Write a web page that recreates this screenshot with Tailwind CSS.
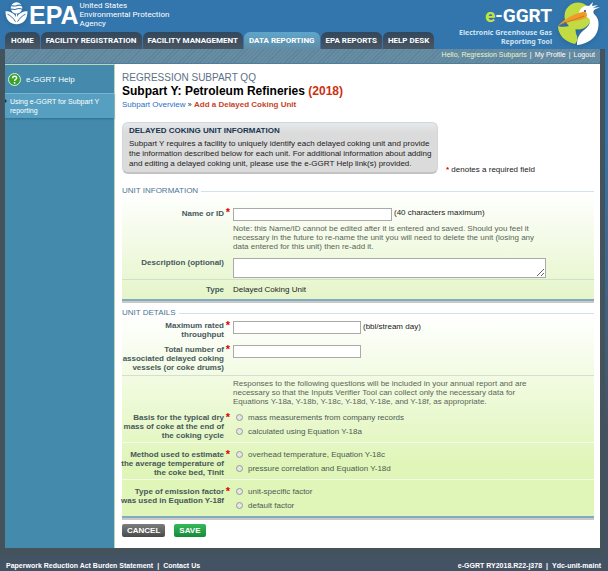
<!DOCTYPE html>
<html lang="en">
  <head>
    <meta charset="UTF-8" />
    <meta name="viewport" content="width=device-width, initial-scale=1.0" />
    <script src="https://cdn.jsdelivr.net/npm/@tailwindcss/browser@4"></script>
    <title>e-GGRT - Add a Delayed Coking Unit</title>
  </head>
  <body class="min-h-screen flex flex-col bg-[#445364] bg-linear-to-b from-[#3276ad] from-25% to-[#445364] to-75% font-['Liberation_Sans',Arial,sans-serif] text-[8px] leading-[9px] text-[#222]">
    <header class="relative bg-[#3276ad] pl-[5px] text-white">
      <a href="#" class="flex items-start h-[32px] pt-[1px] w-fit" aria-label="EPA home">
        <svg class="w-[23px] h-[24px] drop-shadow-sm" viewBox="0 0 23 24" fill="white">
          <circle cx="11.5" cy="7" r="5.8" />
          <path d="M5 5.2c2-1.6 4 .8 6.5-.5s4-.6 6.5.5M5 8.6c2-1.6 4 .8 6.5-.5s4-.6 6.5.5" fill="none" stroke="#3276ad" stroke-width="1.1" />
          <path d="M.5 10.3c4.6 0 8.5 1.8 10.4 5.6v-3h1.2v3c1.9-3.8 5.8-5.6 10.4-5.6 0 8-4 13-11 13S.5 18.3.5 10.3z" />
          <path d="M2.5 13.2c3 1.4 5.8 3.8 8 7.5M20.5 13.2c-3 1.4-5.8 3.8-8 7.5" fill="none" stroke="#3276ad" stroke-width="1" />
        </svg>
        <span class="pl-[1px] font-bold text-[25px] leading-[28px]">EPA</span>
        <span class="pl-[1px] text-[8px] leading-[9px] font-['Roboto',sans-serif]">United States<br />Environmental Protection<br />Agency</span>
      </a>
      <div class="absolute right-[7px] top-[1px] flex gap-[5px]">
        <div class="text-right font-bold pt-[3px]">
          <div class="text-[19px] leading-[24px] font-['Roboto',sans-serif]"><span class="text-[#c6e53c]">e</span>-GGRT</div>
          <div class="text-[7px] leading-[9px] font-['Noto_Sans',sans-serif] text-[#cfe4f3]">Electronic Greenhouse Gas<br />Reporting Tool</div>
        </div>
        <svg class="w-[44px] h-[46px] drop-shadow-sm" viewBox="0 0 44 46">
          <circle cx="21" cy="15" r="13.5" fill="#c0dc42" />
          <path d="M1 25c6 2 12 0 17-2 1 5 0 8 2 12 1 3 0 6-2 8C8 41 1 34 1 25z" fill="#c0dc42" />
          <path d="M22 12c1-5 5-8 10-7l4-4-1 4 6-1-5 3 7-1-6 3c-1 2-1 3 1 5 4 4 4 9 3 14-2 9-10 15-21 16 0-7 2-11 7-15 4-3 6-6 6-9 0-2-2-4-4-4z" fill="white" />
          <path d="M1 25c5-6 13-11 24-14 3-1 5 0 5 3 0 2-1 3-4 4-5 2-13 2-18 3z" fill="#ef9b2a" />
          <path d="M5 23l22-8" stroke="#c9701c" stroke-width=".8" />
          <circle cx="28" cy="10" r="1" fill="#345" />
        </svg>
      </div>
      <nav class="flex items-end gap-[1px] font-['Roboto',sans-serif] font-bold text-[8px] leading-[17px] whitespace-nowrap">
        <a href="#" class="px-[6px] rounded-t-md bg-linear-to-b from-[#31475c] to-[#4a5663]">HOME</a>
        <a href="#" class="px-[5px] rounded-t-md bg-linear-to-b from-[#31475c] to-[#4a5663]">FACILITY REGISTRATION</a>
        <a href="#" class="px-[5px] rounded-t-md bg-linear-to-b from-[#31475c] to-[#4a5663]">FACILITY MANAGEMENT</a>
        <a href="#" class="px-[5px] rounded-t-md bg-linear-to-b from-[#5ea5cb] to-[#608ca5]">DATA REPORTING</a>
        <a href="#" class="px-[5px] rounded-t-md bg-linear-to-b from-[#31475c] to-[#4a5663]">EPA REPORTS</a>
        <a href="#" class="px-[5px] rounded-t-md bg-linear-to-b from-[#31475c] to-[#4a5663]">HELP DESK</a>
      </nav>
    </header>

    <div class="flex-1 flex flex-col mr-[3px] px-[5px] pb-[7px] bg-[#44535b]">
      <div class="flex justify-end gap-[3px] h-[15px] pr-[5px] text-[7px] leading-[11px] text-white border-b border-[#4c7f9b] bg-[repeating-linear-gradient(135deg,#5e849b_0_1px,#668da4_1px_3px)]">
        <span class="text-[#e4f6d2]">Hello, Regression Subparts</span>
        <span>|</span>
        <a href="#">My Profile</a>
        <span>|</span>
        <a href="#">Logout</a>
      </div>

      <div class="flex-1 flex bg-white">
        <aside class="w-[110px] shrink-0 bg-[#448aad] border-t border-r border-[#b9d8b5] text-white">
          <a href="#" class="flex items-center gap-[5px] h-[28px] px-[3px]">
            <svg class="w-[13px] h-[13px]" viewBox="0 0 13 13">
              <circle cx="6.5" cy="6.5" r="6" fill="#3ba32c" stroke="#dcefd8" />
              <path d="M4.6 5.2c0-2.6 4-2.5 4-.3 0 1.5-2 1.4-2 3.1" fill="none" stroke="white" stroke-width="1.4" />
              <circle cx="6.6" cy="9.8" r=".9" fill="white" />
            </svg>
            e-GGRT Help
          </a>
          <a href="#" class="relative block py-[3px] px-[5px] bg-[#579fc1] border-t border-[#78b3cf] shadow-[0_1px_2px_#2d6f92] text-[7px]">
            <span class="absolute left-0 top-[5px] border-y-[2px] border-y-transparent border-l-[2px] border-l-[#22333d]"></span>
            Using e-GGRT for Subpart Y reporting
          </a>
        </aside>

        <main class="flex-1 pl-[7px] pr-[6px] pt-[8px] pb-[11px]">
          <div class="text-[10px] leading-[11px] text-[#5c7286]">REGRESSION SUBPART QQ</div>
          <h1 class="pt-[1px] text-[12px] leading-[15px] font-bold text-black">Subpart Y: Petroleum Refineries <span class="text-[#cc3010]">(2018)</span></h1>
          <div class="leading-[11px]"><a href="#" class="text-[#2a6fc4]">Subpart Overview</a> <span class="text-[7px]">»</span> <span class="font-bold text-[#c8431f]">Add a Delayed Coking Unit</span></div>

          <div class="flex items-end gap-[8px] pt-[12px]">
            <section class="w-[316px] pt-[3px] pb-[3px] pl-[6px] pr-[1px] rounded-md border border-[#d2d6d6] border-b-2 border-b-[#c3c3c3] bg-linear-to-b from-[#e4eaea] to-[#dbdbdb] to-20%">
              <h2 class="font-bold leading-[10px] text-[#193550]">DELAYED COKING UNIT INFORMATION</h2>
              <p class="pt-[3px] leading-[10px]">Subpart Y requires a facility to uniquely identify each delayed coking unit and provide the information described below for each unit. For additional information about adding and editing a delayed coking unit, please use the e-GGRT Help link(s) provided.</p>
            </section>
            <div><span class="text-[#d00] font-bold">*</span> denotes a required field</div>
          </div>

          <form>
            <fieldset class="mt-[12px] border-t border-[#cfe3ec] bg-linear-to-b from-white to-[#e5f5c9] border-b-2 border-b-[#83abc0] shadow-[0_2px_0_#c9c9c9]">
              <legend class="pr-[3px] leading-[10px] text-[#4b7590]">UNIT INFORMATION</legend>
              <div class="grid grid-cols-[102px_1fr] gap-x-[9px] pt-[12px] pb-[7px]">
                <label for="name" class="relative pt-[1px] text-right font-bold text-[#47585b]">Name or ID<span class="absolute -right-[6px] top-0 text-[11px] text-[#d00]">*</span></label>
                <div>
                  <div class="flex items-start gap-[2px]">
                    <input id="name" type="text" maxlength="40" class="w-[159px] h-[13px] bg-white border border-[#aaa]" />
                    <span>(40 characters maximum)</span>
                  </div>
                  <p class="w-[312px] pt-[3px] text-[#5b6559]">Note: this Name/ID cannot be edited after it is entered and saved. Should you feel it necessary in the future to re-name the unit you will need to delete the unit (losing any data entered for this unit) then re-add it.</p>
                </div>
              </div>
              <div class="grid grid-cols-[102px_1fr] gap-x-[9px]">
                <label for="description" class="text-right font-bold text-[#47585b]">Description (optional)</label>
                <textarea id="description" class="block w-[313px] h-[20px] bg-white border border-[#aaa]"></textarea>
              </div>
              <div class="grid grid-cols-[102px_1fr] gap-x-[9px] mt-[1px] py-[5px] border-t border-[#d3dfc8]">
                <span class="text-right font-bold text-[#47585b]">Type</span>
                <span>Delayed Coking Unit</span>
              </div>
            </fieldset>

            <fieldset class="mt-[7px] border-t border-[#cfe3ec] bg-linear-to-b from-white to-[#e0f5b8] to-75% border-b-2 border-b-[#83abc0] shadow-[0_2px_0_#c9c9c9]">
              <legend class="pr-[3px] leading-[10px] text-[#4b7590]">UNIT DETAILS</legend>
              <div class="grid grid-cols-[102px_1fr] gap-x-[9px] pt-[3px]">
                <label for="rate" class="relative text-right font-bold text-[#47585b]">Maximum rated<br />throughput<span class="absolute -right-[6px] top-0 text-[11px] text-[#d00]">*</span></label>
                <div class="flex items-start gap-[2px] h-[24px]">
                  <input id="rate" type="text" class="w-[128px] h-[13px] bg-white border border-[#aaa]" />
                  <span class="pt-[1px]">(bbl/stream day)</span>
                </div>
              </div>
              <div class="grid grid-cols-[102px_1fr] gap-x-[9px] pb-[3px]">
                <label for="vessels" class="relative -ml-[6px] text-right font-bold text-[#47585b]">Total number of<br />associated delayed coking<br />vessels (or coke drums)<span class="absolute -right-[6px] top-0 text-[11px] text-[#d00]">*</span></label>
                <input id="vessels" type="text" class="w-[128px] h-[13px] bg-white border border-[#aaa]" />
              </div>
              <p class="border-t border-[#d3dfd0] pl-[111px] pr-[64px] pt-[3px] pb-[7px] text-[#5b6559]">Responses to the following questions will be included in your annual report and are necessary so that the Inputs Verifier Tool can collect only the necessary data for Equations Y-18a, Y-18b, Y-18c, Y-18d, Y-18e, and Y-18f, as appropriate.</p>

              <div role="radiogroup" aria-labelledby="basis" class="grid grid-cols-[102px_1fr] gap-x-[9px] h-[29px]">
                <span id="basis" class="relative -ml-[6px] text-right font-bold text-[#47585b]">Basis for the typical dry<br />mass of coke at the end of<br />the coking cycle<span class="absolute -right-[6px] top-0 text-[11px] text-[#d00]">*</span></span>
                <div class="flex flex-col gap-[5px] pl-[3px] text-[#4d5a54]">
                  <label class="flex items-center gap-[5px]"><input type="radio" name="basis" class="appearance-none w-[7px] h-[7px] rounded-full border border-[#999] bg-[#e6e6e6]" />mass measurements from company records</label>
                  <label class="flex items-center gap-[5px]"><input type="radio" name="basis" class="appearance-none w-[7px] h-[7px] rounded-full border border-[#999] bg-[#e6e6e6]" />calculated using Equation Y-18a</label>
                </div>
              </div>
              <div role="radiogroup" aria-labelledby="method" class="grid grid-cols-[102px_1fr] gap-x-[9px] h-[37px] pt-[7px] border-t border-[#f4fbe6]">
                <span id="method" class="relative -ml-[6px] text-right font-bold text-[#47585b]">Method used to estimate<br />the average temperature of<br />the coke bed, Tinit<span class="absolute -right-[6px] top-0 text-[11px] text-[#d00]">*</span></span>
                <div class="flex flex-col gap-[5px] pl-[3px] text-[#4d5a54]">
                  <label class="flex items-center gap-[5px]"><input type="radio" name="method" class="appearance-none w-[7px] h-[7px] rounded-full border border-[#999] bg-[#e6e6e6]" />overhead temperature, Equation Y-18c</label>
                  <label class="flex items-center gap-[5px]"><input type="radio" name="method" class="appearance-none w-[7px] h-[7px] rounded-full border border-[#999] bg-[#e6e6e6]" />pressure correlation and Equation Y-18d</label>
                </div>
              </div>
              <div role="radiogroup" aria-labelledby="factor" class="grid grid-cols-[102px_1fr] gap-x-[9px] h-[37px] pt-[7px] border-t border-[#f4fbe6]">
                <span id="factor" class="relative -ml-[6px] text-right font-bold text-[#47585b]">Type of emission factor<br />was used in Equation Y-18f<span class="absolute -right-[6px] top-0 text-[11px] text-[#d00]">*</span></span>
                <div class="flex flex-col gap-[5px] pl-[3px] text-[#4d5a54]">
                  <label class="flex items-center gap-[5px]"><input type="radio" name="factor" class="appearance-none w-[7px] h-[7px] rounded-full border border-[#999] bg-[#e6e6e6]" />unit-specific factor</label>
                  <label class="flex items-center gap-[5px]"><input type="radio" name="factor" class="appearance-none w-[7px] h-[7px] rounded-full border border-[#999] bg-[#e6e6e6]" />default factor</label>
                </div>
              </div>
            </fieldset>

            <div class="flex gap-[9px] pt-[6px] text-white font-bold">
              <button type="button" class="px-[5px] h-[13px] rounded-xs bg-linear-to-b from-[#7d7d7d] to-[#4a4a4a]">CANCEL</button>
              <button type="submit" class="px-[5px] h-[13px] rounded-xs bg-linear-to-b from-[#35ba58] to-[#168a3a]">SAVE</button>
            </div>
          </form>
        </main>
      </div>
    </div>

    <footer class="flex justify-between h-[16px] pt-[6px] pl-[6px] pr-[7px] bg-[#445364] text-white font-bold text-[7px]">
      <div class="flex gap-[4px]"><a href="#">Paperwork Reduction Act Burden Statement</a><span>|</span><a href="#">Contact Us</a></div>
      <div class="flex gap-[4px]"><span>e-GGRT RY2018.R22-j378</span><span>|</span><span>Ydc-unit-maint</span></div>
    </footer>
  </body>
</html>
